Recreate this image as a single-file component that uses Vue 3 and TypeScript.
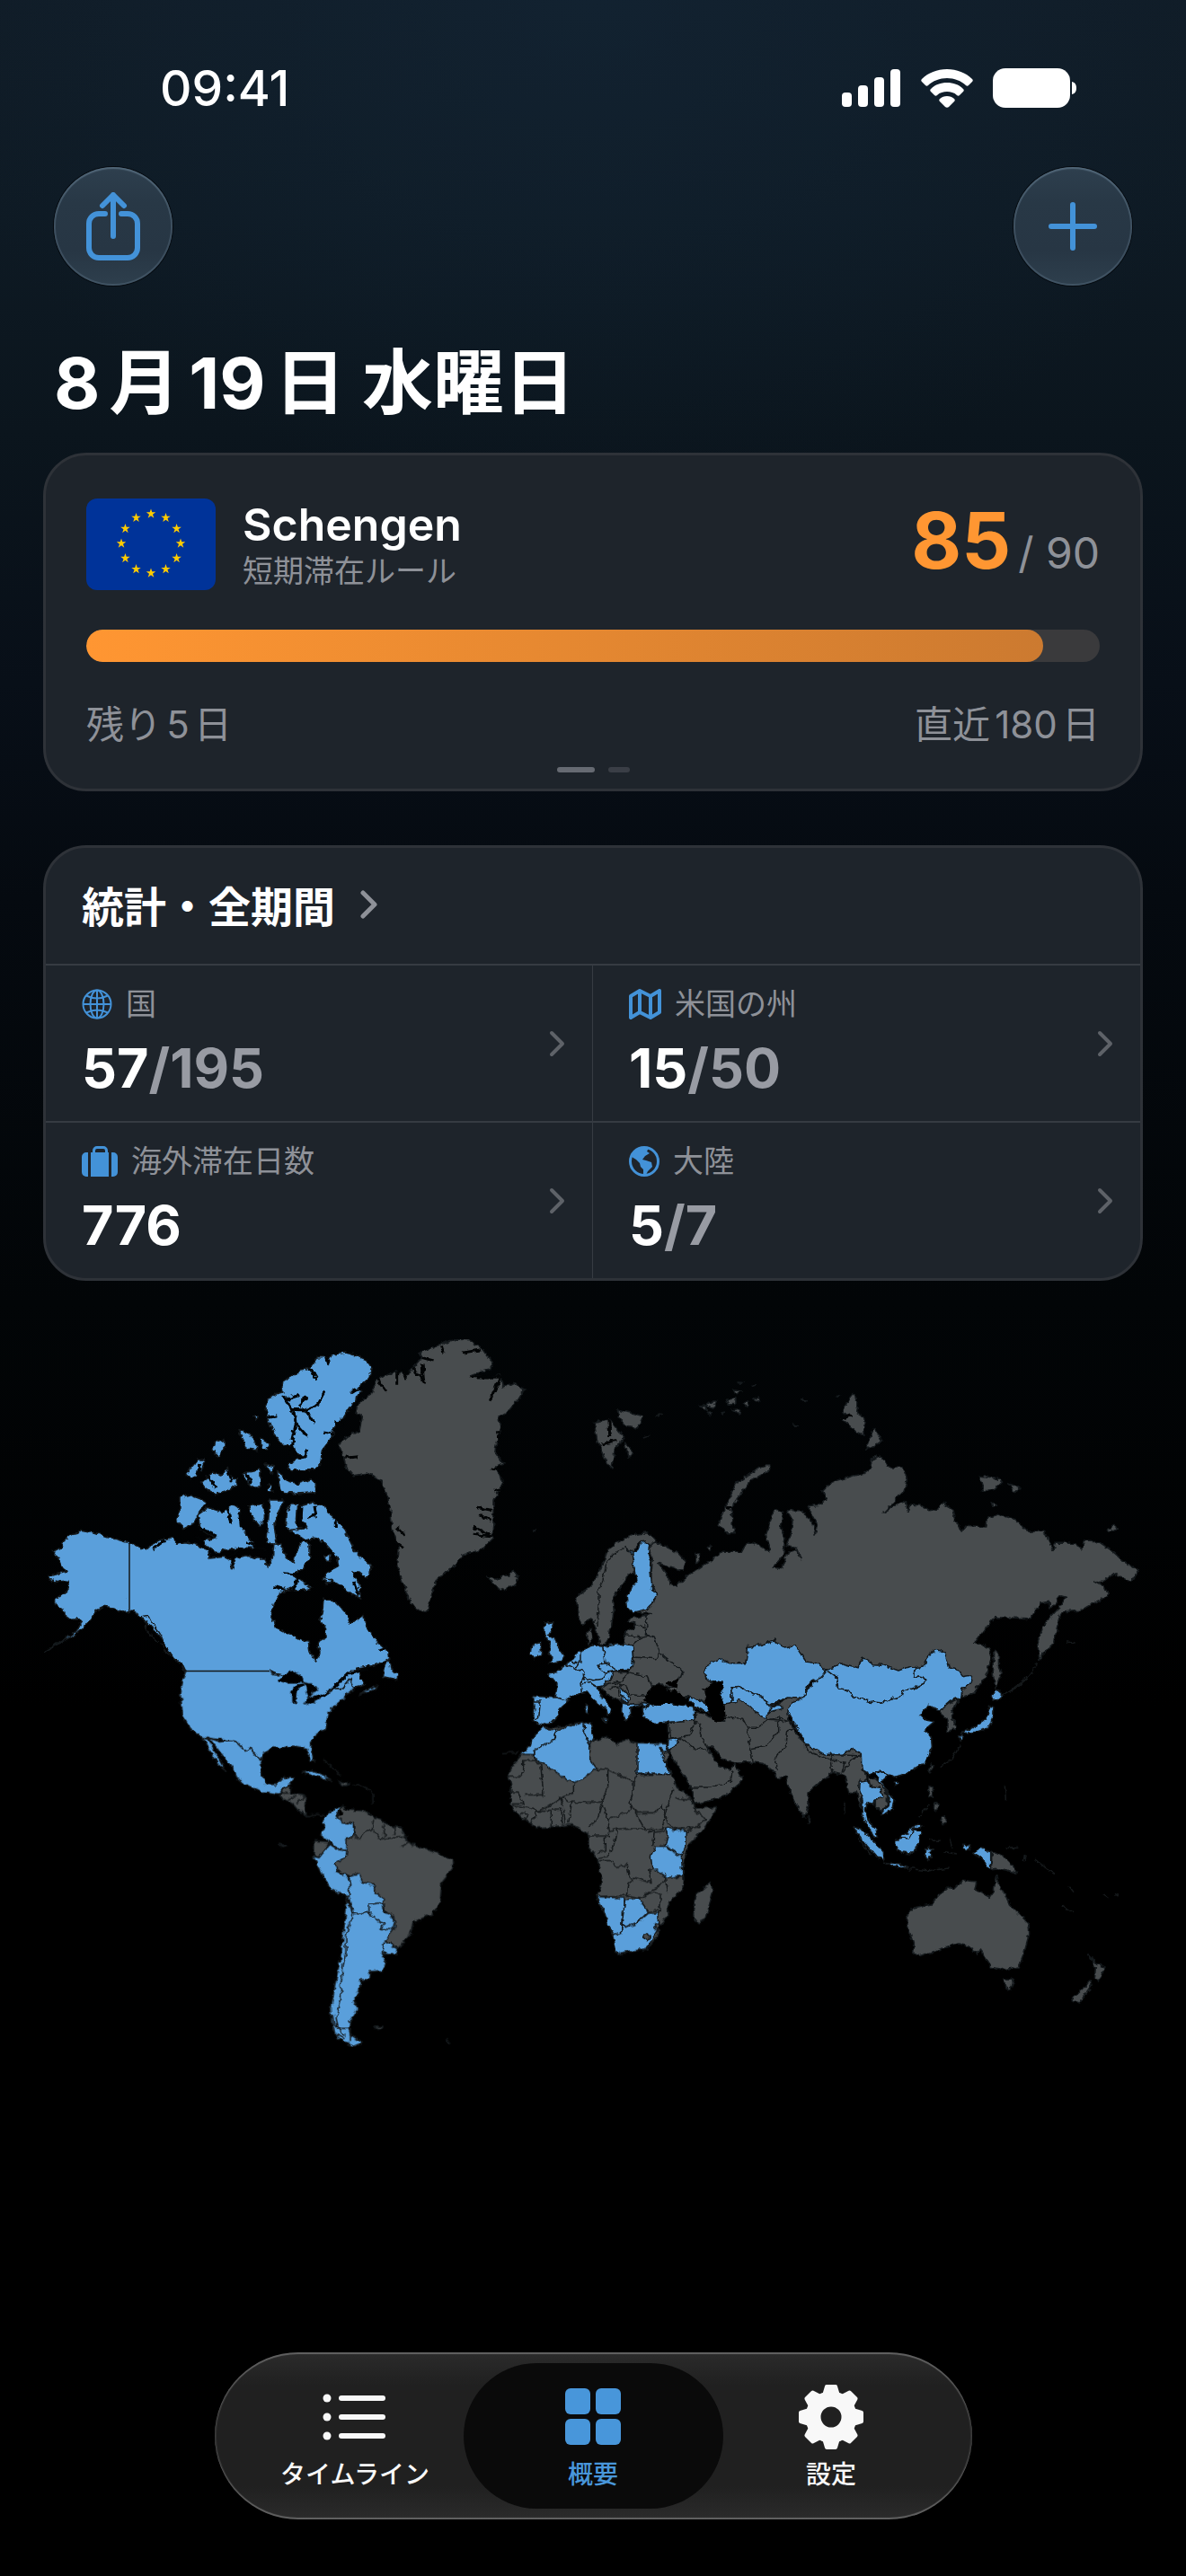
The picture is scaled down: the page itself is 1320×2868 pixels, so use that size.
<script setup lang="ts">
interface Shape {
  kind: 'seen' | 'rest' | 'sea' | 'fjord' | 'line'
  d: string
}
interface Region {
  name: string
  at: string
  shapes: Shape[]
}
interface Stat {
  icon: 'globe' | 'map' | 'case' | 'earth'
  label: string
  value: string
  total: string
}

const used = 85
const allowed = 90
const fill = `${(used / allowed) * 100}%`

const stats: Stat[] = [
  { icon: 'globe', label: '国', value: '57', total: '/195' },
  { icon: 'map', label: '米国の州', value: '15', total: '/50' },
  { icon: 'case', label: '海外滞在日数', value: '776', total: '' },
  { icon: 'earth', label: '大陸', value: '5', total: '/7' },
]

const stars = Array.from({ length: 12 }, (_, i) => {
  const a = (i * Math.PI) / 6
  return { x: 72 + 33 * Math.sin(a), y: 50 - 33 * Math.cos(a) }
})
const teeth = [0, 45, 90, 135, 180, 225, 270, 315]

const seen = (...ds: string[]): Shape[] => ds.map((p) => ({ kind: 'seen', d: `M${p}z` }))
const rest = (...ds: string[]): Shape[] => ds.map((p) => ({ kind: 'rest', d: `M${p}z` }))
const sea = (...ds: string[]): Shape[] => ds.map((p) => ({ kind: 'sea', d: `M${p}z` }))
const fjord = (d: string): Shape => ({ kind: 'fjord', d })
const line = (d: string): Shape => ({ kind: 'line', d })

const T = 'scale(.33333)'

// Borders that follow a meridian or a parallel stay ruler-straight.
const straightBorders = 'M104 249V322M168 390.500H260'

const regions: Region[] = [
  {
    name: 'Canada and Alaska',
    at: T,
    shapes: [
      ...seen(
        '150 700 195 708 240 722 311 744 311 970 290 975 260 960 225 955 205 965 190 990 165 1020 130 1050 90 1072 60 1087 28 1108 70 1080 110 1055 140 1035 150 1015 145 998 115 1000 95 985 90 965 65 950 65 930 100 905 110 890 105 870 60 875 42 852 75 843 105 838 85 825 75 800 55 770 85 760 90 740 115 718 140 712',
        '311 744 345 758 370 765 385 750 410 735 440 728 455 725 470 748 500 740 530 748 575 765 580 795 630 790 650 800 655 830 668 795 700 785 740 795 765 795 775 825 790 790 795 745 815 745 835 790 860 810 870 770 885 740 915 745 915 790 890 830 860 850 885 870 920 895 870 905 855 895 820 905 795 945 783 985 800 1025 840 1045 885 1068 910 1075 915 1110 935 1140 948 1110 940 1075 965 1060 968 1030 950 1005 958 960 960 930 1000 940 1020 960 1040 985 1050 1015 1075 995 1095 985 1100 1020 1120 1050 1145 1080 1175 1105 1178 1130 1150 1145 1120 1155 1070 1165 1040 1185 1000 1225 970 1240 905 1275 875 1200 800 1180 780 1171 500 1171 490 1150 460 1130 440 1100 420 1065 400 1040 370 1010 345 985 325 970 311 970',
        '1178 1130 1165 1160 1160 1190 1205 1200 1210 1185 1185 1165',
        '990 1232 1025 1190 1050 1168 1080 1168 1085 1200 1100 1215 1060 1230 1050 1195 1025 1228',
        '820 210 850 190 885 165 915 160 940 122 975 122 1005 112 1035 108 1070 118 1100 130 1122 165 1110 195 1075 225 1086 235 1060 275 1030 320 1000 350 985 395 955 435 950 480 930 500 850 500 840 480 870 465 900 455 870 445 860 420 825 418 800 385 780 340 768 300 775 265 800 245 825 240',
        '805 500 835 535 875 545 920 530 935 550 930 575 860 580 815 570',
        '690 510 750 500 750 555 720 555 700 535', '765 480 797 488 785 510', '775 545 792 570 775 570',
        '550 540 590 510 620 520 640 490 650 520 670 530 668 555 600 582 565 560',
        '500 515 540 465 565 465 550 500 520 530', '675 365 700 370 730 400 740 435 710 430 690 395',
        '750 392 778 410 770 435 752 425', '600 405 630 397 630 430 605 457 590 430', '728 318 742 322 738 336',
        '480 590 510 583 545 595 568 610 545 640 525 680 495 695 470 670 480 630',
        '540 650 575 625 620 640 660 615 680 630 685 690 715 735 740 760 700 760 650 765 600 775 565 750 560 735 600 725 550 700',
        '710 620 760 612 760 660 745 688 720 655', '780 600 825 600 815 635 795 680 800 720 805 748 770 745 775 690',
        '850 612 875 612 870 680 885 690 850 705 835 690 838 640',
        '885 620 920 610 960 618 975 645 1000 665 1030 700 1050 740 1065 770 1095 800 1122 825 1105 860 1080 840 1055 840 1080 880 1085 930 1060 915 1020 890 985 865 960 870 975 840 1010 820 1005 790 975 755 945 725 900 735 870 715 850 700 905 695 885 660',
        '965 785 982 785 980 805 965 805', '958 862 985 868 970 882'
      ),
      fjord('M825 250 855 298 900 300 940 282 965 235M900 300 930 345M860 300 868 345 895 375 910 385M868 345 855 400M915 160 940 200M970 122 978 150M1050 243 1085 222M835 265 880 250M880 290 900 255M805 320 775 325M960 375 990 380M860 400 850 450 900 460 905 430M1000 340 1030 345M640 620 650 680M680 640 685 690M540 690 605 722M930 620 935 650 910 660M885 620 880 690M1000 665 1000 690M560 735 530 720M575 520 600 560M640 500 655 540M705 510 715 545M860 900 880 850 825 845M795 890 830 898M1145 1100 1175 1090M1060 870 1080 920M980 1240 1045 1180 1110 1160M545 480 540 530M690 760 640 790M390 765 430 735M700 740 770 770'),
      line('M350 990 375 985 390 1015 410 1040 425 1065M370 1010 365 1035 395 1060 410 1075M420 1080 430 1105 450 1120M465 1130 485 1145 500 1185'),
    ],
  },
  {
    name: 'United States and Mexico',
    at: `translate(120 350) ${T}`,
    shapes: [
      ...seen(
        '140 122 420 122 430 130 460 135 515 155 540 160 575 185 545 215 610 195 630 182 665 178 690 148 705 180 680 195 665 215 635 240 615 260 610 310 560 350 560 380 572 425 555 420 545 380 500 372 470 380 430 378 395 400 390 420 355 380 335 385 305 355 200 345 160 320 130 270 122 200 130 150',
        '218 345 255 358 288 353 305 355 335 385 355 380 392 422 395 470 410 500 445 500 470 475 502 475 490 500 460 515 450 535 400 528 350 505 315 485 300 450 260 400',
        '198 345 216 350 240 395 272 455 250 435 225 395', '735 190 780 168 765 185 720 202',
        '530 460 560 455 600 468 628 487 590 478'
      ),
      ...rest('452 540 465 515 490 505 490 530 540 538 538 585 545 605 520 590 500 565', '650 495 690 498 670 505'),
      ...sea('450 155 490 122 520 135 530 158 480 158', '495 190 515 168 535 165 512 185 508 222 495 228', '540 165 560 165 578 185 560 190 552 210 545 185', '540 225 575 205 620 195 600 205 550 232'),
      line('M545 605 575 600 600 605M600 415 655 470M700 500 740 510 765 530 765 570'),
    ],
  },
  {
    name: 'Greenland and Iceland',
    at: `translate(320 0) ${T}`,
    shapes: [
      ...rest(
        '400 75 440 63 485 65 525 90 540 110 568 140 555 165 490 182 545 190 590 185 600 225 635 208 672 230 650 265 620 300 585 320 590 360 572 440 600 480 575 490 600 540 570 600 570 640 565 700 565 730 530 765 465 785 440 820 385 855 365 900 355 945 345 975 310 965 285 930 262 870 245 820 250 750 230 700 225 640 215 590 195 540 150 510 100 518 75 490 68 460 50 415 75 390 120 370 130 320 108 305 120 270 160 250 175 200 240 170 275 180 300 160 330 125 320 110 360 95',
        '545 855 575 865 620 850 635 832 650 860 645 880 600 902 570 885', '700 700 712 698 702 706'
      ),
      fjord('M465 108 525 98M490 188 590 190 555 272M180 195 212 238M245 170 245 215M265 165 278 198M300 160 335 205 330 145M330 125 368 135M395 85 402 110M70 460 115 455M560 495 600 500M510 625 565 635M520 650 560 670M500 690 565 720M500 715 560 722M245 690 270 715M240 740 270 760M590 320 600 345M580 370 595 450M570 570 600 560'),
    ],
  },
  {
    name: 'Russia and the Arctic islands',
    at: 'translate(600 10) scale(.42092 .33333)',
    shapes: [
      ...rest(
        '205 710 230 720 270 745 292 775 285 805 250 795 220 780 245 820 250 850 268 860 285 835 320 805 350 780 385 745 440 745 455 710 480 718 515 745 505 690 515 640 530 600 548 610 545 670 555 700 550 760 525 795 545 800 565 740 590 740 598 770 585 730 560 725 570 690 575 640 560 605 600 605 630 650 635 690 640 650 615 590 650 585 665 570 655 540 680 510 720 495 765 480 780 465 785 435 805 420 820 440 830 462 865 462 878 500 870 540 840 580 815 612 850 585 875 575 880 610 885 585 915 588 935 605 960 600 970 580 998 600 1005 640 1022 675 1035 655 1085 660 1090 630 1120 618 1165 635 1195 675 1240 675 1255 710 1263 740 1270 715 1320 715 1340 735 1345 708 1385 710 1420 740 1450 775 1490 805 1470 845 1425 815 1400 840 1375 842 1400 860 1410 890 1370 915 1335 940 1285 945 1275 990 1268 1045 1240 1080 1228 1105 1222 1040 1240 985 1280 930 1298 895 1285 890 1255 935 1255 910 1230 915 1205 965 1110 962 1085 1000 1058 1045 1095 1065 1100 1100 1085 1160 1055 1215 1025 1228 1015 1170 930 1160 765 1140 680 1150 600 1130 580 1085 520 1060 460 1080 450 1120 380 1115 350 1130 345 1160 360 1180 345 1240 335 1252 285 1225 240 1205 260 1185 285 1150 280 1135 225 1095 190 1030 185 960 205 950 165 945 213 885 200 850 205 765 195 730',
        '1110 1070 1120 1080 1120 1130 1128 1150 1112 1200 1105 1150',
        '500 455 515 455 515 470 460 510 435 555 415 595 415 640 420 680 400 680 380 650 395 600 410 560 425 515 460 485',
        '733 215 748 240 745 280 765 295 765 355 745 345 720 315 700 300 720 285 705 275', '790 330 812 375 770 400 780 365',
        '50 310 90 300 115 340 130 360 105 400 97 465 78 430 60 380', '110 270 150 280 180 290 165 330 135 320 120 300', '130 375 155 415 140 430',
        '345 255 360 240 375 240 365 265', '330 255 342 252 350 275', '400 235 425 230 425 250 405 252', '418 200 440 205 425 218', '445 245 460 240 455 262', '470 235 485 222 488 242', '415 270 435 265 432 285', '350 280 365 278 360 288', '385 278 395 276 392 286', '430 177 442 178 436 184', '465 184 478 186 470 190', '600 236 610 238 604 243', '690 220 700 222 694 226', '576 318 588 320 582 323',
        '1070 490 1110 495 1130 510 1110 535 1080 540', '1145 515 1178 530 1160 540', '1100 575 1118 590 1105 595', '1408 668 1425 655 1435 665 1415 674', '350 725 362 722 360 738 352 738', '318 748 332 750 330 770 320 785'
      ),
      fjord('M90 300 92 360M70 385 110 370M700 300 730 285M400 592 415 600'),
      line('M1222 1110 1205 1150 1180 1180 1150 1208M215 290 230 282M180 360 200 352M1300 1040 1320 1048'),
    ],
  },
  {
    name: 'Europe and western Asia',
    at: `translate(520 190) ${T}`,
    shapes: [
      ...rest(
        '245 360 250 430 265 445 300 425 310 460 325 515 340 510 355 485 365 430 370 400 365 360 385 330 410 295 420 275 440 275 435 240 430 205 460 170 475 165 488 175 490 185 510 165 505 155 480 140 440 145 400 160 350 195 330 250 300 310 250 350',
        '275 470 295 460 300 490 285 512',
        '430 425 475 415 480 450 475 480 505 490 525 545 600 600 590 630 560 640 575 655 545 655 520 640 500 650 480 680 475 710 450 720 420 715 400 700 380 700 350 680 330 660 325 645 360 625 365 605 420 605 435 560 430 515 400 510 410 470 435 460 440 440 415 435',
        '550 775 640 765 645 738 675 745 700 762 740 772 735 720 760 700 800 695 880 735 950 690 1020 690 950 760 1000 840 1050 860 1200 860 1205 900 1215 960 1195 980 1195 1060 1180 1005 1155 1010 1140 950 1100 940 1080 955 1020 1005 1020 1050 1008 1089 985 1060 960 1010 942 955 920 960 900 935 870 910 820 905 770 905 730 895 700 855 680 855 720 920 760 930 770 910 800 960 780 985 740 1020 690 1035 640 1045 630 990 590 930 560 880 550 850'
      ),
      ...seen(
        '408 188 435 205 455 195 460 170 475 165 488 180 485 205 495 235 492 270 500 330 512 348 495 380 480 395 435 405 415 390 412 350 430 325 450 295 440 275 435 240 430 210',
        '140 440 168 440 160 465 150 482 170 490 185 520 205 550 195 568 150 575 165 555 150 545 160 530 145 490 135 470', '90 545 95 515 125 505 128 545 100 560',
        '148 608 180 605 210 578 235 560 245 540 270 530 285 520 300 515 335 520 345 518 400 510 430 515 435 580 420 598 380 600 365 605 355 630 335 650 315 655 325 680 345 705 362 728 358 745 350 752 345 730 325 715 300 698 280 672 265 675 225 685 210 700 175 690 180 645 160 620',
        '100 685 175 690 218 700 190 725 185 750 160 775 130 782 100 770 105 720', '325 760 350 762 345 772', '275 718 287 720 285 745 276 742',
        '390 648 420 688 415 705 400 702 395 680', '398 705 425 712 470 708 425 722 428 750 410 768 395 735', '461 706 490 712 470 720',
        '465 725 510 715 550 708 600 715 635 720 640 765 600 770 555 775 500 775 470 755', '610 685 660 700 690 715 693 742 675 735 640 718',
        '670 605 690 575 720 562 755 575 810 575 818 520 860 515 905 498 940 525 975 515 1010 570 1045 575 1080 600 1060 640 1035 630 1010 660 1012 695 950 690 920 700 890 720 865 685 835 680 795 655 762 660 762 710 735 715 720 680 735 640 710 635 690 640',
        '762 660 795 655 835 680 865 685 890 720 920 715 935 725 885 738 880 765 850 745 820 715 790 698 762 710', '552 830 590 822 560 865 550 855'
      ),
      ...sea('672 665 710 635 735 640 722 680 735 700 742 760 720 772 700 765 690 735 678 700', '475 700 485 670 515 645 530 670 575 665 615 700 600 715 550 708 500 715', '545 645 585 630 575 655'),
      line('M410 190 375 205 345 235 335 290 318 330 318 380 315 450M210 578 240 595 270 605 272 625 258 640 262 675M335 520 342 575 360 572M315 580 345 575 380 600 345 606 320 595zM272 625 300 632 330 628 345 606M258 530 258 570 240 595M222 570 250 575M262 645 290 640 315 655M105 705 124 705 118 765 105 765'),
      line('M410 480 460 490 490 485M432 515 450 500 465 490M440 445 475 455M435 555 510 560 520 545M420 605 480 620 495 650M365 635 390 640 420 605M335 650 360 640 410 650 420 680 475 685M350 660 385 655 388 690M435 560 420 600M395 680 420 705'),
      line('M640 765 660 780 658 810 680 855M555 780 560 830 620 815 645 770M590 825 640 860 680 865M740 755 800 760 815 790 825 860 835 905M815 790 850 790 885 765 920 755 920 800 880 850 825 860M920 755 960 770 990 790 950 800 945 850 910 890 915 930M1010 850 1090 880 1095 900 1010 865zM880 765 950 770M885 735 920 700M1095 880 1200 885M1100 900 1140 905 1130 950M625 990 690 990 760 970 765 935M635 720 660 735'),
    ],
  },
  {
    name: 'South America',
    at: `translate(240 490) ${T}`,
    shapes: [
      ...rest(
        '300 155 320 165 380 168 400 185 430 195 450 215 500 225 520 270 545 285 610 305 670 330 672 360 635 405 630 470 605 512 540 540 530 580 490 630 445 598 460 520 400 440 330 388 312 380 280 360 280 340 315 320 318 258 290 190',
        '207 268 262 272 245 300 225 325 207 315', '288 70 330 75 310 85', '410 890 440 888 425 898', '650 932 662 942 655 940', '92 280 115 284 105 288'
      ),
      ...seen(
        '242 190 275 165 300 152 285 185 300 205 340 212 340 258 318 258 318 300 290 298 262 272 230 250 240 225',
        '262 280 290 298 318 302 315 320 280 345 285 370 312 380 328 400 325 460 265 430 235 380 205 320 225 325 245 300',
        '330 388 360 378 370 405 412 418 415 442 440 460 440 505 395 508 340 512 325 460',
        '318 462 340 512 390 508 440 540 475 520 480 555 445 600 437 645 450 680 435 702 395 705 392 732 365 732 360 770 340 805 355 830 330 870 325 895 330 915 370 943 340 955 290 930 270 890 265 830 280 740 300 640 315 500',
        '395 480 435 475 440 505 462 510 478 540 470 565 432 562 440 545 395 515', '445 600 487 630 480 650 437 645'
      ),
      line('M340 512 330 540 315 590 315 640 305 690 298 750 298 800 282 860 290 895 330 895M330 895 330 940M270 850 280 910 310 930M280 880 310 920M340 215 345 250 360 265 380 235 405 230 410 195M405 230 430 262 520 255M440 215 445 255M480 220 478 250M500 290 525 275 540 290M340 212 300 205M118 130 150 120M95 108 125 110M150 140 178 120'),
      ...sea('295 170 304 172 302 182 295 182'),
    ],
  },
  {
    name: 'Africa',
    at: `translate(500 410) ${T}`,
    shapes: [
      ...rest(
        '120 222 150 190 155 170 190 130 240 130 320 112 350 112 360 150 360 175 410 160 440 190 460 170 505 180 600 185 612 210 605 250 630 300 640 330 685 365 700 400 775 395 750 440 720 480 680 520 665 560 660 600 665 660 610 720 612 760 580 790 580 820 540 870 440 888 430 840 400 750 373 695 390 640 375 570 345 530 345 490 310 465 290 455 240 460 170 465 120 430 80 385 90 340 78 290 90 260',
        '755 645 763 670 735 770 710 783 695 760 705 685'
      ),
      ...seen(
        '190 130 235 140 235 165 165 210 165 224 118 222 150 190 155 170', '235 140 320 115 335 112 330 150 350 190 350 240 370 268 320 305 295 317 165 232 165 205 235 168', '330 115 352 112 362 160 348 188 332 150',
        '507 180 605 185 612 205 600 215 582 197 600 240 618 285 507 285', '600 465 670 475 668 530 655 558 600 525 610 490', '567 527 600 527 655 560 660 625 605 632 557 595 553 560',
        '373 695 465 700 465 740 457 745 455 815 430 822 410 790 395 740', '467 705 512 700 545 745 505 785 470 797 457 780', '425 822 455 815 457 785 470 797 505 785 545 750 575 750 580 800 540 868 440 888'
      ),
      ...rest('528 830 540 818 550 830 538 842', '565 790 576 785 580 800 568 802'),
      line('M165 225 165 240 128 240 128 275 115 292 80 292M185 252 195 355 130 355M185 252 165 240M295 317 295 350 260 362 200 400 170 410M370 268 410 270 410 330 390 378 320 380 280 378 260 362M410 270 495 310 507 285M495 310 495 350 480 380 490 405 410 437 400 405 390 378M390 385 380 430 345 460M410 437 415 475 440 470 490 465 530 465 500 410M480 385 510 415 570 415 590 390 600 430 590 470 530 470M507 287 625 287M630 335 600 410M600 410 610 450 640 470 700 465 740 435 700 410 690 370 635 365M700 465 672 480M440 470 430 520 410 560 378 565M400 495 400 540 375 550M345 492 415 492 415 475M378 575 420 575 440 595 475 590 480 630 495 640 480 650 475 690 373 695M495 630 555 650 545 605 560 600M475 690 520 700 560 670 590 655 600 640M545 480 565 475 560 525M565 480 600 475M512 700 560 680 585 690 585 740 575 750M605 632 610 680M600 615 605 640M585 740 545 745M635 632 662 628'),
      line('M80 345 110 345 130 385 85 385M90 390 160 400 170 410 165 430 150 450M120 420 130 412 142 425 130 440M170 410 220 410 220 460M222 402 255 402 258 455M262 402 268 450M290 378 278 450M250 362 262 395M60 215 110 212'),
    ],
  },
  {
    name: 'East Asia and Oceania',
    at: `translate(860 350) ${T}`,
    shapes: [
      ...seen(
        '62 120 95 145 98 180 130 183 155 213 240 228 310 205 315 185 350 180 395 157 380 140 352 138 360 110 385 105 402 60 430 50 455 60 470 110 500 120 515 140 545 135 540 160 512 182 510 208 475 220 440 252 420 245 400 235 372 268 390 285 420 290 390 315 410 345 412 375 385 430 330 462 290 475 265 468 245 452 205 465 180 450 178 400 150 382 115 400 60 400 20 385 -20 360 -20 345 -70 260 -60 230 -15 210 -5 180 20 160 40 145',
        '62 120 110 95 165 110 180 75 215 98 245 100 300 120 340 105 360 110 352 138 380 140 395 157 350 180 315 185 310 205 240 228 155 213 130 183 98 180 95 145',
        '282 495 292 488 298 495 288 503', '172 490 195 485 210 505 235 510 250 545 220 550 215 565 195 560 190 590 200 625 225 650 230 680 210 665 195 630 180 605 180 550 170 520',
        '220 460 245 452 265 470 245 490 265 525 285 550 280 580 245 605 245 590 268 575 270 545 255 515 235 490',
        '148 640 175 650 215 690 250 725 252 752 230 745 195 705 165 665', '253 760 300 765 335 780 300 778', '288 685 315 682 350 655 375 655 375 665 365 700 350 730 300 725', '300 680 330 660 368 630 380 640 350 652 335 680', '392 715 405 705 400 715 418 720 405 725 412 745 402 740 398 755 390 740',
        '548 730 575 712 608 722 608 782 595 770 580 750', '515 703 540 705 535 717 518 712', '610 205 625 180 652 203 635 218 612 220', '605 240 618 245 610 290 600 312 560 325 510 330 530 318 560 305 590 285', '502 335 515 335 508 357'
      ),
      ...rest(
        '440 252 475 225 500 215 480 260 475 275 490 290 488 318 465 320 465 285 445 268', '200 475 235 490 265 540 265 570 240 588 220 570 220 550 250 545 235 510 205 505',
        '611 724 650 740 680 770 700 798 670 788 640 782 611 785', '402 505 415 510 415 545 400 540', '440 610 458 605 460 625 450 635', '410 432 414 440 405 462 399 455', '-2 605 6 620 -2 632',
        '330 935 350 912 410 900 430 875 465 840 485 850 515 820 560 825 555 850 605 878 618 860 625 805 640 850 655 865 670 900 700 930 735 965 737 1000 720 1060 700 1110 650 1118 610 1110 585 1075 575 1050 560 1070 545 1045 500 1032 440 1050 370 1073 350 1065 352 1040 330 970',
        '650 1150 685 1150 675 1185 660 1180', '935 1068 962 1102 990 1110 970 1155 955 1150 958 1112', '940 1155 945 1170 905 1230 875 1220 915 1185', '420 560 432 565 428 590 418 580', '720 740 728 735 718 752'
      ),
      line('M180 450 195 470M115 460 140 420 165 405M75 410 80 460M340 782 400 788 470 780M405 688 440 688M470 680 480 710M365 610 400 570M120 560 120 600M440 440 480 415 505 370M660 715 700 712M755 750 800 785 825 800M870 840 885 860M845 905 880 930M655 505 658 550M165 680 210 735M640 205 690 180 730 145M450 725 495 732M985 870 1000 880M1020 865 1030 872'),
    ],
  },
]
</script>

<template>
  <div class="screen">
    <div class="status">
      <span class="clock">09:41</span>
      <div class="signals">
        <svg width="66" height="42" viewBox="0 0 66 42" aria-hidden="true">
          <rect x="0" y="26" width="11" height="16" rx="4" /><rect x="18" y="18" width="11" height="24" rx="4" />
          <rect x="36" y="9" width="11" height="33" rx="4" /><rect x="54" y="0" width="11" height="42" rx="4" />
        </svg>
        <svg width="58" height="43" viewBox="0 0 58 43" aria-hidden="true">
          <path d="M29 0C18 0 8 4 1 11c-1 1-1 2 0 3l4 4c1 1 2 1 3 0C13 13 21 10 29 10s16 3 21 8c1 1 2 1 3 0l4-4c1-1 1-2 0-3C50 4 40 0 29 0z" />
          <path d="M29 15c-7 0-13 2-18 7-1 1-1 2 0 3l4 4c1 1 2 1 3 0 3-3 7-4 11-4s8 1 11 4c1 1 2 1 3 0l4-4c1-1 1-2 0-3-5-5-11-7-18-7z" />
          <path d="M29 30c-3 0-6 1-8 3-1 1-1 2 0 3l6 6c1 1 3 1 4 0l6-6c1-1 1-2 0-3-2-2-5-3-8-3z" />
        </svg>
        <svg width="94" height="44" viewBox="0 0 94 44" aria-hidden="true">
          <rect width="86" height="44" rx="14" /><path d="M88 15c4 1 5 4 5 7s-1 6-5 7z" />
        </svg>
      </div>
    </div>

    <header class="actions">
      <button class="round" type="button" aria-label="共有">
        <svg width="60" height="76" viewBox="0 0 60 76" aria-hidden="true">
          <path d="M21 24h-7a11 11 0 0 0-11 11v27a11 11 0 0 0 11 11h32a11 11 0 0 0 11-11V35a11 11 0 0 0-11-11h-7M30 49V3M18 15 30 3l12 12" />
        </svg>
      </button>
      <button class="round" type="button" aria-label="追加">
        <svg width="56" height="56" viewBox="0 0 56 56" aria-hidden="true"><path d="M28 4v48M4 28h48" /></svg>
      </button>
    </header>

    <h1>8月19日 水曜日</h1>

    <section class="card rule">
      <div class="rule-head">
        <svg class="flag" viewBox="0 0 144 102" role="img" aria-label="EU">
          <rect width="144" height="102" rx="12" />
          <path v-for="(s, i) in stars" :key="i" :transform="`translate(${s.x} ${s.y})`" d="M0-5.5 1.3-1.7h4L2 .7l1.3 4L0 2.3l-3.3 2.4 1.3-4-3.3-2.4h4z" />
        </svg>
        <div class="rule-name">
          <h2>Schengen</h2>
          <p>短期滞在ルール</p>
        </div>
        <div class="count"><strong>{{ used }}</strong><span>/ {{ allowed }}</span></div>
      </div>
      <div class="bar" role="progressbar" :aria-valuenow="used" aria-valuemin="0" :aria-valuemax="allowed">
        <div class="bar-fill" :style="{ width: fill }"></div>
      </div>
      <div class="rule-foot"><span>残り5日</span><span>直近180日</span></div>
      <div class="pager"><i class="on"></i><i></i></div>
    </section>

    <section class="card">
      <button class="stats-head" type="button">
        <span>統計・全期間</span>
        <svg width="20" height="32" viewBox="0 0 20 32" aria-hidden="true"><path d="m3 3 13 13L3 29" /></svg>
      </button>
      <div class="grid">
        <button v-for="s in stats" :key="s.label" class="cell" type="button">
          <span class="cell-text">
            <span class="label">
              <svg v-if="s.icon === 'globe'" width="34" height="34" viewBox="0 0 34 34" class="stroke" aria-hidden="true">
                <circle cx="17" cy="17" r="15.500" /><ellipse cx="17" cy="17" rx="7.500" ry="15.500" />
                <path d="M17 1v32M1 17h32M5 7.500q12 6 24 0M5 26.500q12-6 24 0" />
              </svg>
              <svg v-else-if="s.icon === 'map'" width="36" height="34" viewBox="0 0 36 34" class="stroke thick" aria-hidden="true">
                <path d="M2 8 12 2l12 6 10-6v24l-10 6-12-6-10 6zM12 2v24M24 8v24" />
              </svg>
              <svg v-else-if="s.icon === 'case'" width="40" height="34" viewBox="0 0 40 34" class="solid" aria-hidden="true">
                <path d="M5 7h2v27H5a5 5 0 0 1-5-5V12a5 5 0 0 1 5-5zM33 7h2a5 5 0 0 1 5 5v17a5 5 0 0 1-5 5h-2zM10 7h2V5a5 5 0 0 1 5-5h7a5 5 0 0 1 5 5v2h1v27H10zM15 7h11V5a2 2 0 0 0-2-2h-7a2 2 0 0 0-2 2z" />
              </svg>
              <svg v-else width="34" height="34" viewBox="0 0 34 34" class="earth" aria-hidden="true">
                <circle cx="17" cy="17" r="15.500" />
                <path d="M4 9C8 3 14 1 22 2l-2 4 3 2-5 3-3 4 4 1 6 2 1 5-5 5-2 4-3-1v-5l-3-3-1-4-4-4-5-3z" />
              </svg>
              {{ s.label }}
            </span>
            <span class="value">{{ s.value }}<em>{{ s.total }}</em></span>
          </span>
          <svg class="chev" width="18" height="30" viewBox="0 0 18 30" aria-hidden="true"><path d="m3 3 12 12L3 27" /></svg>
        </button>
      </div>
    </section>

    <svg class="world" viewBox="0 0 1240 830" role="img" aria-label="訪問した国の地図">
      <filter id="coast" x="0" y="0" width="100%" height="100%" color-interpolation-filters="sRGB">
        <feTurbulence type="fractalNoise" baseFrequency=".16" numOctaves="2" seed="4" />
        <feDisplacementMap in="SourceGraphic" scale="6" xChannelSelector="R" yChannelSelector="G" />
      </filter>
      <g filter="url(#coast)">
        <g v-for="r in regions" :key="r.name" :transform="r.at">
          <path v-for="(s, i) in r.shapes" :key="i" :class="s.kind" :d="s.d" />
        </g>
      </g>
      <path class="cover" :d="straightBorders" />
      <path class="line" :d="straightBorders" />
    </svg>

    <nav class="tabs">
      <a class="tab" href="#timeline">
        <svg width="72" height="72" viewBox="0 0 72 72" aria-hidden="true">
          <circle cx="5" cy="15" r="4.500" /><circle cx="5" cy="36" r="4.500" /><circle cx="5" cy="57" r="4.500" />
          <rect x="18" y="12" width="52" height="6" rx="3" /><rect x="18" y="33" width="52" height="6" rx="3" /><rect x="18" y="54" width="52" height="6" rx="3" />
        </svg>
        <span>タイムライン</span>
      </a>
      <a class="tab active" href="#overview" aria-current="page">
        <svg width="72" height="72" viewBox="0 0 72 72" aria-hidden="true">
          <rect x="5" y="4" width="28" height="29" rx="6" /><rect x="39" y="4" width="28" height="29" rx="6" />
          <rect x="5" y="38" width="28" height="29" rx="6" /><rect x="39" y="38" width="28" height="29" rx="6" />
        </svg>
        <span>概要</span>
      </a>
      <a class="tab" href="#settings">
        <svg width="72" height="72" viewBox="-36 -36 72 72" aria-hidden="true">
          <circle class="ring" r="20" />
          <path v-for="t in teeth" :key="t" class="tooth" :transform="`rotate(${t})`" d="M-8-24-5-34H5L8-24z" />
        </svg>
        <span>設定</span>
      </a>
    </nav>
  </div>
</template>

<style>
body {
  margin: 0;
  background: #000;
}
</style>

<style scoped>
.screen {
  box-sizing: border-box;
  min-height: 100vh;
  display: flex;
  flex-direction: column;
  padding: 0 48px 63px;
  color: #fff;
  font-family: Inter, "Noto Sans CJK JP", sans-serif;
  text-autospace: normal;
  background:
    radial-gradient(ellipse 760px 560px at 50% 0, rgba(20, 40, 58, 0.5), transparent),
    linear-gradient(#101c27 0, #0e1a24 240px, #0b151d 480px, #080f18 760px, #050a10 1000px, #020507 1450px, #000 1900px);
}
button {
  font: inherit;
  color: inherit;
  background: none;
  border: 0;
  padding: 0;
  text-align: left;
}
h1, h2, p { margin: 0; }
svg { display: block; flex: none; }

.status {
  height: 186px;
  box-sizing: border-box;
  padding: 10px 73px 0 130px;
  display: flex;
  justify-content: space-between;
  align-items: center;
}
.clock { font-size: 55px; line-height: 64px; font-weight: 500; }
.signals { display: flex; align-items: center; gap: 22px; fill: #fff; }

.actions { display: flex; justify-content: space-between; padding: 0 12px; }
.round {
  width: 132px;
  height: 132px;
  border-radius: 50%;
  display: flex;
  align-items: center;
  justify-content: center;
  background: linear-gradient(#2e3f4e, #283846 30%, #273644 70%, #2e3f4d);
  box-shadow: inset 0 0 0 2px rgba(130, 160, 180, 0.22), inset 0 2px 2px rgba(160, 190, 210, 0.2), 0 0 0 1px #060b10;
}
.round svg { fill: none; stroke: #4392d8; stroke-width: 6; stroke-linecap: round; stroke-linejoin: round; }

h1 { font-size: 79px; line-height: 120px; font-weight: 700; padding: 48px 12px 18px; }

.card {
  background: #1e242b;
  border: 3px solid #2e3238;
  border-radius: 48px;
  overflow: hidden;
  margin-bottom: 60px;
}
.rule { padding: 48px 45px 18px; }
.rule-head { display: flex; align-items: center; height: 102px; }
.flag { width: 144px; height: 102px; fill: #ffcc00; }
.flag rect { fill: #003399; }
.rule-name { margin-left: 30px; flex: 1; }
h2 { font-size: 50px; line-height: 60px; font-weight: 600; }
.rule-name p { font-size: 34px; line-height: 44px; color: #8e9198; }
.count { display: flex; align-items: baseline; gap: 8px; line-height: 102px; padding-top: 6px; }
.count strong { font-size: 86px; font-weight: 700; color: #ff9632; }
.count span { font-size: 48px; color: #8e9198; }
.bar { height: 36px; margin-top: 44px; border-radius: 18px; background: #3a3a3c; overflow: hidden; }
.bar-fill { height: 36px; border-radius: 18px; background: linear-gradient(90deg, #ff9632, #cc7a30); }
.rule-foot { display: flex; justify-content: space-between; margin-top: 40px; font-size: 42px; line-height: 60px; color: #8e9198; }
.pager { display: flex; justify-content: center; gap: 15px; margin-top: 17px; }
.pager i { width: 24px; height: 6px; border-radius: 3px; background: #3a3e46; }
.pager .on { width: 42px; background: #666a72; }

.stats-head {
  box-sizing: border-box;
  width: 100%;
  height: 129px;
  padding: 0 40px 4px;
  display: flex;
  align-items: center;
  gap: 28px;
  font-size: 47px;
  font-weight: 700;
}
.stats-head svg { fill: none; stroke: #8e9198; stroke-width: 5; stroke-linecap: round; stroke-linejoin: round; }
.grid { display: grid; grid-template-columns: 1fr 1fr; }
.cell {
  box-sizing: border-box;
  height: 175px;
  padding: 0 30px 0 40px;
  display: flex;
  align-items: center;
  justify-content: space-between;
  border-top: 2px solid #363b42;
}
.cell:nth-child(odd) { border-right: 1px solid #363b42; }
.cell-text { display: flex; flex-direction: column; gap: 4px; }
.label { display: flex; align-items: center; gap: 15px; font-size: 34px; line-height: 50px; color: #8e9198; }
.value { font-size: 61px; line-height: 84px; font-weight: 700; }
.value em { font-style: normal; color: #989ba3; }
.stroke { fill: none; stroke: #4392d8; stroke-width: 2; }
.thick { stroke-width: 4; stroke-linejoin: round; }
.solid { fill: #4392d8; fill-rule: evenodd; }
.earth circle { fill: none; stroke: #4392d8; stroke-width: 3; }
.earth path { fill: #4392d8; }
.chev { fill: none; stroke: #5e6268; stroke-width: 4; stroke-linecap: round; stroke-linejoin: round; }

.world { align-self: stretch; margin: -16px -8px 0; height: auto; }
.world path { stroke: #14191c; stroke-width: 1.500px; vector-effect: non-scaling-stroke; stroke-linejoin: round; }
.world .seen { fill: #5a9fdb; }
.world .rest { fill: #484c4e; }
.world .sea { fill: #000; stroke: #000; }
.world .fjord { fill: none; stroke: #020405; stroke-width: 3px; }
.world .line { fill: none; stroke: #15191b; }
.world .cover { fill: none; stroke: #5a9fdb; stroke-width: 7px; }

.tabs {
  align-self: center;
  box-sizing: border-box;
  display: flex;
  margin-top: auto;
  padding: 12px 24px;
  border-radius: 93px;
  background: linear-gradient(#2b2b2b, #202020 20%, #202020 80%, #2b2b2b);
  box-shadow: inset 0 0 0 2px rgba(255, 255, 255, 0.08), inset 0 2px 1px rgba(255, 255, 255, 0.2), inset 0 -2px 1px rgba(255, 255, 255, 0.2);
}
.tab {
  box-sizing: border-box;
  width: 289px;
  height: 162px;
  margin: 0 -12px;
  padding-top: 24px;
  border-radius: 81px;
  display: flex;
  flex-direction: column;
  align-items: center;
  gap: 8px;
  color: #f8f8f8;
  fill: #f8f8f8;
  font-size: 28px;
  line-height: 40px;
  font-weight: 500;
  text-decoration: none;
}
.active { background: #0a0a0a; color: #4896da; fill: #4896da; }
.ring { fill: none; stroke: #f8f8f8; stroke-width: 17; }
.tooth { stroke: #f8f8f8; stroke-width: 4; stroke-linejoin: round; }
</style>
